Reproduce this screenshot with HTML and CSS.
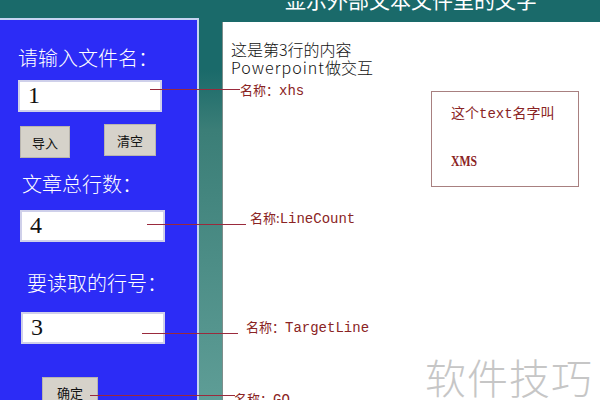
FILE: index.html
```html
<!DOCTYPE html>
<html lang="zh-CN">
<head>
    <meta charset="UTF-8">
    <title>显示外部文本文件里的文字</title>
    <link rel="stylesheet" href="styles.css">
</head>
<body>

<div class="page">
    <div class="header">
        <h1 class="title">显示外部文本文件里的文字</h1>
    </div>

    <div class="main">
        <div class="form-panel">
            <p class="label label-file">请输入文件名：</p>
            <div class="field field-file">1</div>
            <div class="btn-row">
                <span class="btn btn-import">导入</span>
                <span class="btn btn-clear">清空</span>
            </div>
            <p class="label label-count">文章总行数：</p>
            <div class="field field-count">4</div>
            <p class="label label-target">要读取的行号：</p>
            <div class="field field-target">3</div>
            <span class="btn btn-go">确定</span>
        </div>

        <div class="strip"></div>

        <div class="slide">
            <div class="output">
                <p>这是第3行的内容</p>
                <p><span class="latin">Powerpoint</span>做交互</p>
            </div>
            <div class="note">
                <p>这个<span class="mono">text</span>名字叫</p>
                <p class="note-name">XMS</p>
            </div>
        </div>
    </div>

    <!-- callouts naming each control -->
    <div class="wire" style="left:150px; top:89px; width:90px;"></div>
    <span class="tag" style="left:240px; top:81px;">名称：<span class="mono">xhs</span></span>

    <div class="wire" style="left:147px; top:224px; width:99px;"></div>
    <span class="tag" style="left:250px; top:209px;">名称:<span class="mono">LineCount</span></span>

    <div class="wire" style="left:142px; top:333px; width:96px;"></div>
    <span class="tag" style="left:246px; top:318px;">名称：<span class="mono">TargetLine</span></span>

    <div class="wire" style="left:90px; top:395px; width:145px;"></div>
    <span class="tag" style="left:234px; top:390px;">名称：<span class="mono">GO</span></span>

    <div class="watermark">软件技巧</div>
</div>

</body>
</html>
```

FILE: styles.css
```css
body, h1, p {
    margin: 0;
    padding: 0;
}
body {
    font-family: "Noto Sans CJK SC", sans-serif;
}
.page {
    position: relative;
    width: 600px;
    height: 400px;
    overflow: hidden;
    display: flex;
    flex-direction: column;
    background: linear-gradient(to bottom, #1a6a6a 0, #1a6a6a 70px, #3b7e77 130px, #5e9d96 400px);
}
.header {
    flex-shrink: 0;
    height: 18px;
    padding-left: 222px;
}
.title {
    margin-top: -17px;
    text-align: center;
    color: #fff;
    font-size: 21px;
    font-weight: 400;
    line-height: 32px;
}
.main {
    flex: 1;
    min-height: 0;
    display: flex;
}

/* blue form on the left */
.form-panel {
    width: 197px;
    background-color: #2c2cf6;
    border-top: 2px solid #c6d4f2;
    border-right: 2px solid #c6d4f2;
    color: #fff;
}
.label {
    font-size: 20px;
    line-height: 24px;
    font-weight: 300;
    white-space: nowrap;
}
.label-file {
    margin: 26px 0 0 18px;
}
.label-count {
    margin: 14px 0 0 22px;
}
.label-target {
    margin: 29px 0 0 27px;
}
.field {
    box-sizing: border-box;
    height: 32px;
    padding-left: 8px;
    background-color: #fff;
    border: 2px solid #cfd0ea;
    color: #111;
    font-family: "Liberation Serif", serif;
    font-size: 24px;
    line-height: 27px;
}
.field-file {
    width: 144px;
    margin: 10px 0 0 18px;
}
.field-count {
    width: 145px;
    margin: 14px 0 0 20px;
}
.field-target {
    width: 144px;
    margin: 17px 0 0 21px;
}
.btn-row {
    display: flex;
    align-items: flex-start;
    margin: 12px 0 0 20px;
}
.btn {
    box-sizing: border-box;
    display: flex;
    align-items: center;
    justify-content: center;
    height: 32px;
    background-color: #d6d2ca;
    border: 1px solid #b9b5ae;
    color: #111;
    font-size: 13px;
}
.btn-import {
    width: 50px;
    margin-top: 2px;
}
.btn-clear {
    width: 52px;
    margin-left: 34px;
}
.btn-go {
    width: 56px;
    height: 30px;
    margin: 33px 0 0 42px;
}

/* teal gap between the panels */
.strip {
    width: 23px;
}

/* white slide on the right */
.slide {
    flex: 1;
    margin-top: 4px;
    padding: 18px 0 0 8px;
    background-color: #fff;
    border-left: 1px solid #7d8e8b;
}
.output {
    color: #111;
    font-size: 16px;
    line-height: 18px;
    font-weight: 300;
}
.latin {
    letter-spacing: 1px;
}
.note {
    box-sizing: border-box;
    width: 148px;
    height: 96px;
    margin: 15px 0 0 200px;
    padding: 11px 0 0 19px;
    border: 1px solid #a88080;
    color: #8a2424;
    font-size: 14px;
    line-height: 18px;
}
.note-name {
    display: inline-block;
    margin-top: 29px;
    font-family: "Liberation Serif", serif;
    font-weight: 700;
    font-size: 15px;
    transform: scaleX(0.78);
    transform-origin: left center;
}
.mono {
    font-family: "Liberation Mono", monospace;
    font-size: 14px;
}

/* callout wires and their labels */
.wire {
    position: absolute;
    height: 1px;
    background-color: #9a2a3c;
}
.tag {
    position: absolute;
    color: #8a2424;
    font-size: 13px;
    line-height: 18px;
    white-space: nowrap;
}
.watermark {
    position: absolute;
    right: 7px;
    bottom: -6px;
    color: #c6c6c6;
    font-size: 41px;
    font-weight: 300;
    letter-spacing: 1px;
}
```
